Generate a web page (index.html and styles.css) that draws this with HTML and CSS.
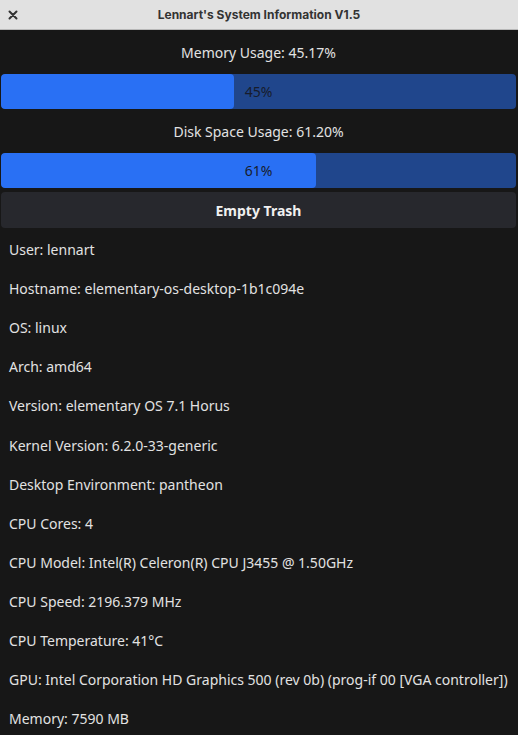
FILE: index.html
```html
<!DOCTYPE html>
<html>
<head>
<meta charset="utf-8">
<link rel="stylesheet" href="styles.css">
</head>
<body>
<div class="window">
  <header class="titlebar">
    <span class="close">
      <svg width="10" height="10" viewBox="0 0 10 10"><path d="M1.5 1.5 L8.5 8.5 M8.5 1.5 L1.5 8.5" stroke="#333" stroke-width="2" stroke-linecap="round"/></svg>
    </span>
    <span class="title">Lennart's System Information V1.5</span>
  </header>
  <main class="content">
    <div class="label">Memory Usage: 45.17%</div>
    <div class="bar">
      <div class="fill" style="width:45.17%"></div>
      <span class="pct">45%</span>
    </div>
    <div class="label">Disk Space Usage: 61.20%</div>
    <div class="bar">
      <div class="fill" style="width:61.2%"></div>
      <span class="pct">61%</span>
    </div>
    <button class="btn">Empty Trash</button>
    <ul class="info">
      <li>User: lennart</li>
      <li>Hostname: elementary-os-desktop-1b1c094e</li>
      <li>OS: linux</li>
      <li>Arch: amd64</li>
      <li>Version: elementary OS 7.1 Horus</li>
      <li>Kernel Version: 6.2.0-33-generic</li>
      <li>Desktop Environment: pantheon</li>
      <li>CPU Cores: 4</li>
      <li>CPU Model: Intel(R) Celeron(R) CPU J3455 @ 1.50GHz</li>
      <li>CPU Speed: 2196.379 MHz</li>
      <li>CPU Temperature: 41°C</li>
      <li>GPU: Intel Corporation HD Graphics 500 (rev 0b) (prog-if 00 [VGA controller])</li>
      <li>Memory: 7590 MB</li>
    </ul>
  </main>
</div>
</body>
</html>
```
FILE: styles.css
```css
html, body {
  margin: 0;
  padding: 0;
  background: #171717;
  overflow: hidden;
}
.window {
  width: 518px;
  height: 735px;
  display: flex;
  flex-direction: column;
  background: #171717;
}
.titlebar {
  flex-shrink: 0;
  height: 29px;
  border-bottom: 1px solid #b8b8b8;
  background: #e1e1e1;
  display: flex;
  align-items: center;
  justify-content: center;
  position: relative;
  font-family: Inter, "Liberation Sans", sans-serif;
  font-weight: 700;
  font-size: 12px;
  color: #333;
}
.close {
  position: absolute;
  left: 8px;
  top: 10px;
  width: 10px;
  height: 10px;
  display: flex;
}
.content {
  flex-shrink: 0;
  display: flex;
  flex-direction: column;
  padding: 0 2px 0 1px;
  font-family: "Noto Sans", "Open Sans", sans-serif;
  font-size: 14px;
  color: #e2e2e2;
}
.label {
  flex-shrink: 0;
  height: 44px;
  display: flex;
  align-items: center;
  justify-content: center;
}
.bar {
  flex-shrink: 0;
  position: relative;
  height: 35px;
  border-radius: 4px;
  background: #20468c;
  overflow: hidden;
  display: flex;
  align-items: center;
  justify-content: center;
}
.fill {
  position: absolute;
  left: 0;
  top: 0;
  bottom: 0;
  background: #2970f4;
  border-radius: 4px;
}
.pct {
  position: relative;
  color: #171c2c;
}
.btn {
  flex-shrink: 0;
  margin-top: 4px;
  height: 36px;
  border: none;
  border-radius: 4px;
  background: #27282d;
  color: #f0f0f0;
  font-family: "Noto Sans", "Open Sans", sans-serif;
  font-weight: 700;
  font-size: 14px;
  padding: 0;
}
.info {
  flex-shrink: 0;
  list-style: none;
  margin: 2px 0 0;
  padding: 0 0 0 8px;
}
.info li {
  height: 39.1px;
  display: flex;
  align-items: center;
  white-space: nowrap;
}
```
